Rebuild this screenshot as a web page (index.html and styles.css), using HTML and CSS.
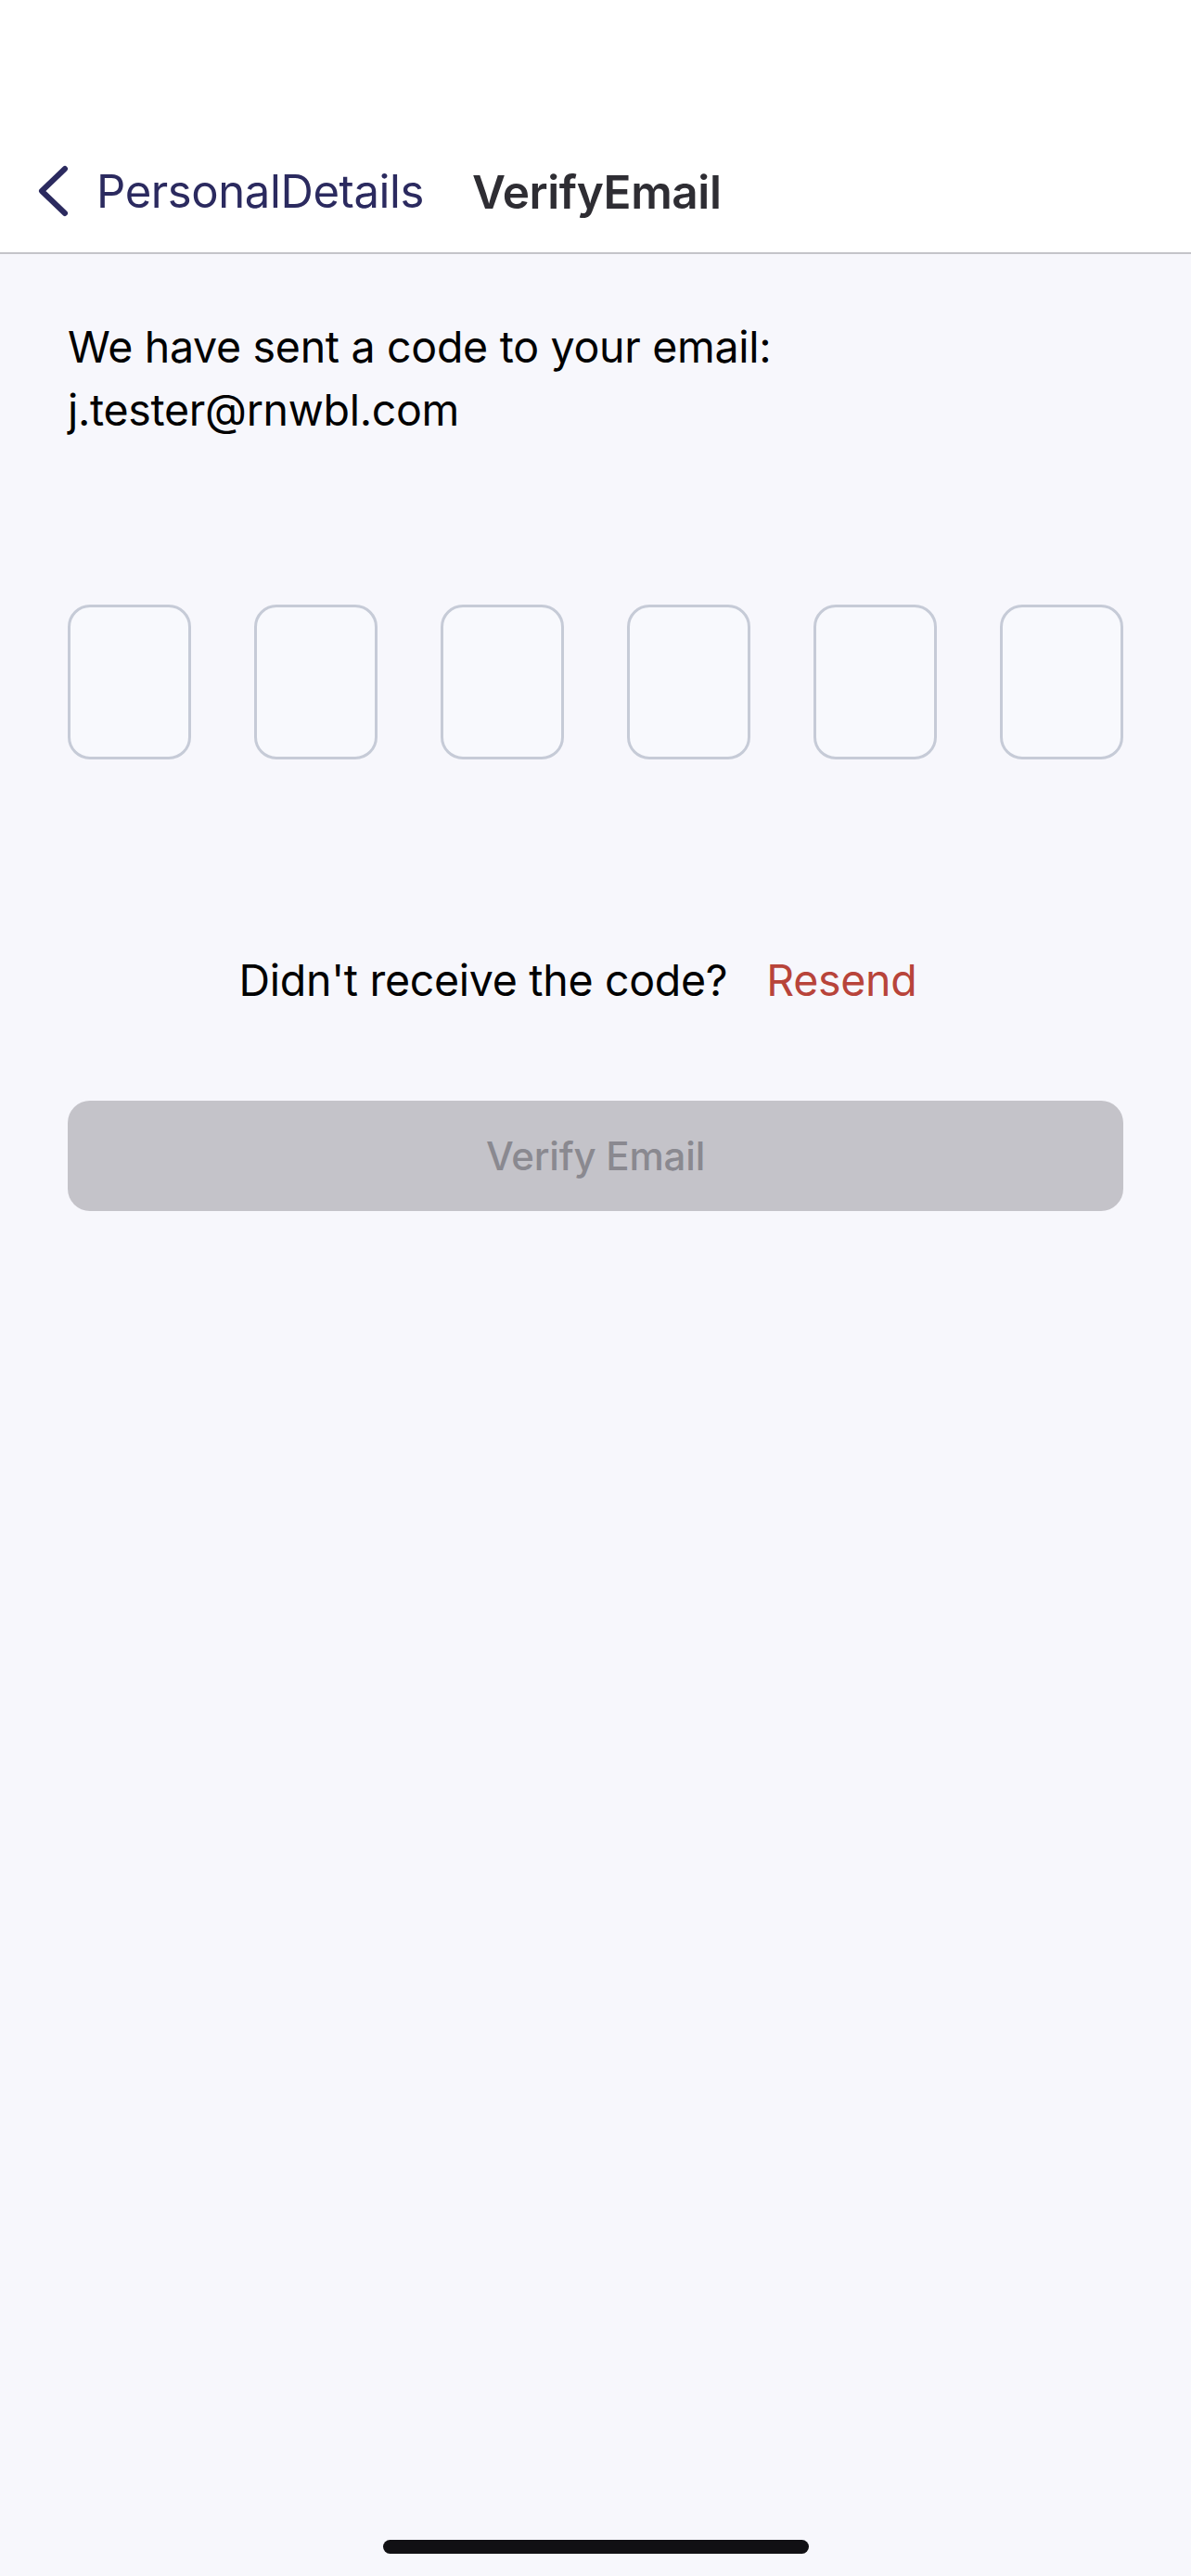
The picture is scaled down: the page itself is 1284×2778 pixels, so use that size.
FILE: index.html
```html
<!DOCTYPE html>
<html lang="en">
<head>
  <meta charset="UTF-8">
  <title>VerifyEmail</title>
  <meta name="viewport" content="width=device-width, initial-scale=1.0">
  <link rel="stylesheet" href="styles.css">
</head>
<body>
<div class="screen">

  <!-- nav bar -->
  <div class="nav">
    <div class="nav-row">
      <a class="back" href="#">
        <svg class="chevron" width="36" height="56" viewBox="0 0 36 56">
          <path d="M31 4 L6 28 L31 52" fill="none" stroke="#2b2a5f" stroke-width="6" stroke-linecap="round" stroke-linejoin="round"/>
        </svg>
        <span class="back-label">PersonalDetails</span>
      </a>
      <span class="nav-title">VerifyEmail</span>
    </div>
  </div>

  <!-- content -->
  <div class="content">
    <p class="intro">We have sent a code to your email:<br>j.tester@rnwbl.com</p>

    <div class="code-row">
      <div class="code-box"></div>
      <div class="code-box"></div>
      <div class="code-box"></div>
      <div class="code-box"></div>
      <div class="code-box"></div>
      <div class="code-box"></div>
    </div>

    <div class="resend-row">
      <span class="resend-q">Didn't receive the code?</span>
      <a class="resend-link" href="#">Resend</a>
    </div>

    <button class="verify-btn" disabled>Verify Email</button>
  </div>

  <div class="home-indicator"></div>
</div>
</body>
</html>
```

FILE: styles.css
```css
html, body { margin: 0; padding: 0; }
body { font-family: Inter, "Noto Sans", sans-serif; background-color: #f7f7fc; color: #000; }
.screen { width: 1284px; height: 2778px; display: flex; flex-direction: column; position: relative; }

.nav { background: #fff; padding-top: 141px; border-bottom: 2px solid #c4c4c9; }
.nav-row { height: 131px; display: flex; align-items: center; padding-left: 39px; }
.back { display: flex; align-items: center; text-decoration: none; color: #2b2a5f; }
.chevron { display: block; margin-top: -2px; }
.back-label { font-size: 49px; margin-left: 29px; letter-spacing: -0.4px; }
.nav-title { font-size: 49.5px; font-weight: 600; color: #2e2d33; margin-left: 52px; letter-spacing: -0.4px; }

.content { padding: 0 73px; }
.intro { margin: 66px 0 0; font-size: 46.5px; line-height: 68px; letter-spacing: -0.3px; }

.code-row { display: flex; gap: 68px; margin-top: 176px; }
.code-box {
  width: 133px; height: 167px; box-sizing: border-box;
  border: 3px solid #c6cbd7; border-radius: 24px; background: #f8f9fd;
}

.resend-row {
  display: flex; justify-content: center; align-items: center; gap: 42px;
  margin-top: 204px; padding-right: 38px;
  font-size: 46.5px; line-height: 68px; letter-spacing: -0.3px;
}
.resend-link { color: #b8443a; text-decoration: none; }

.verify-btn {
  display: block; width: 100%; height: 119px; margin-top: 96px;
  background: #c4c3c9; color: #8a8990; border: none; border-radius: 24px;
  font-family: Inter, "Noto Sans", sans-serif; font-size: 42px; font-weight: 500; letter-spacing: -0.2px;
}

.home-indicator {
  position: absolute; left: 413px; bottom: 24px; width: 459px; height: 15px;
  background: #111014; border-radius: 8px;
}
```
